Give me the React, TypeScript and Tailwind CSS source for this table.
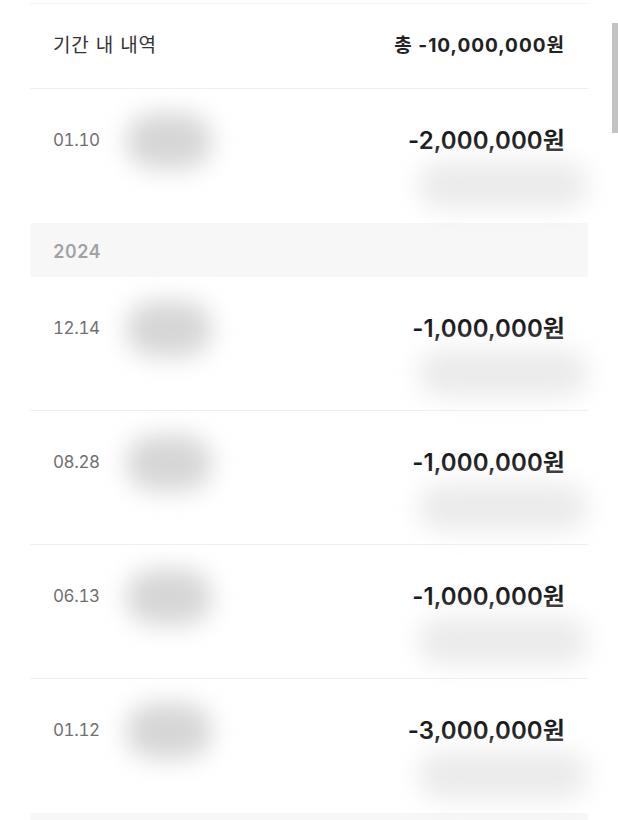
const ROWS_2025 = [{ date: '01.10', amount: '-2,000,000원' }]

const ROWS_2024 = [
  { date: '12.14', amount: '-1,000,000원' },
  { date: '08.28', amount: '-1,000,000원' },
  { date: '06.13', amount: '-1,000,000원' },
  { date: '01.12', amount: '-3,000,000원' },
]

function Row({ date, amount, last }: { date: string; amount: string; last?: boolean }) {
  return (
    <div className={`relative h-[134px] px-[23px] pt-[38px] ${last ? '' : 'border-b border-[#efefef]'}`}>
      <div className="flex items-center justify-between h-[28px]">
        <span className="text-[17px] text-[#707070] tabular-nums tracking-[-0.4px]">{date}</span>
        <span className="text-[24px] font-semibold text-[#1b1b1b] tracking-[0.1px]">{amount}</span>
      </div>
      {/* blurred name */}
      <div className="absolute left-[96px] top-[24px] w-[86px] h-[56px] rounded-full bg-[#d6d6d6] blur-[12px]" />
      {/* blurred memo */}
      <div className="absolute right-[0px] top-[72px] w-[170px] h-[48px] rounded-full bg-[#ebebeb] blur-[12px]" />
    </div>
  )
}

export default function App() {
  return (
    <div
      className="relative w-[618px] h-[820px] bg-white overflow-hidden"
      style={{ fontFamily: 'Inter, "Noto Sans CJK KR", sans-serif' }}
    >
      <div className="ml-[30px] w-[558px] pt-[3px]">
        <div className="border-t border-[#f3f3f3]" />

        {/* header */}
        <div className="flex items-center justify-between h-[85px] px-[23px] border-b border-[#efefef]">
          <span className="text-[19px] text-[#333] tracking-[0.8px]">기간 내 내역</span>
          <span className="text-[19px] font-bold text-[#222] tracking-[1px]">총 -10,000,000원</span>
        </div>

        {ROWS_2025.map(r => (
          <Row key={r.date} {...r} last />
        ))}

        {/* year */}
        <div className="h-[54px] bg-[#f7f7f7] px-[23px] pt-[3px] flex items-center">
          <span className="text-[18px] font-semibold text-[#a3a3a3] tabular-nums tracking-[0.3px]">2024</span>
        </div>

        {ROWS_2024.map((r, i) => (
          <Row key={r.date} {...r} last={i === ROWS_2024.length - 1} />
        ))}

        <div className="h-[20px] bg-[#f7f7f7]" />
      </div>

      {/* scrollbar */}
      <div className="absolute left-[612px] top-[23px] w-[6px] h-[110px] bg-[#c3c3c3]" />
    </div>
  )
}
